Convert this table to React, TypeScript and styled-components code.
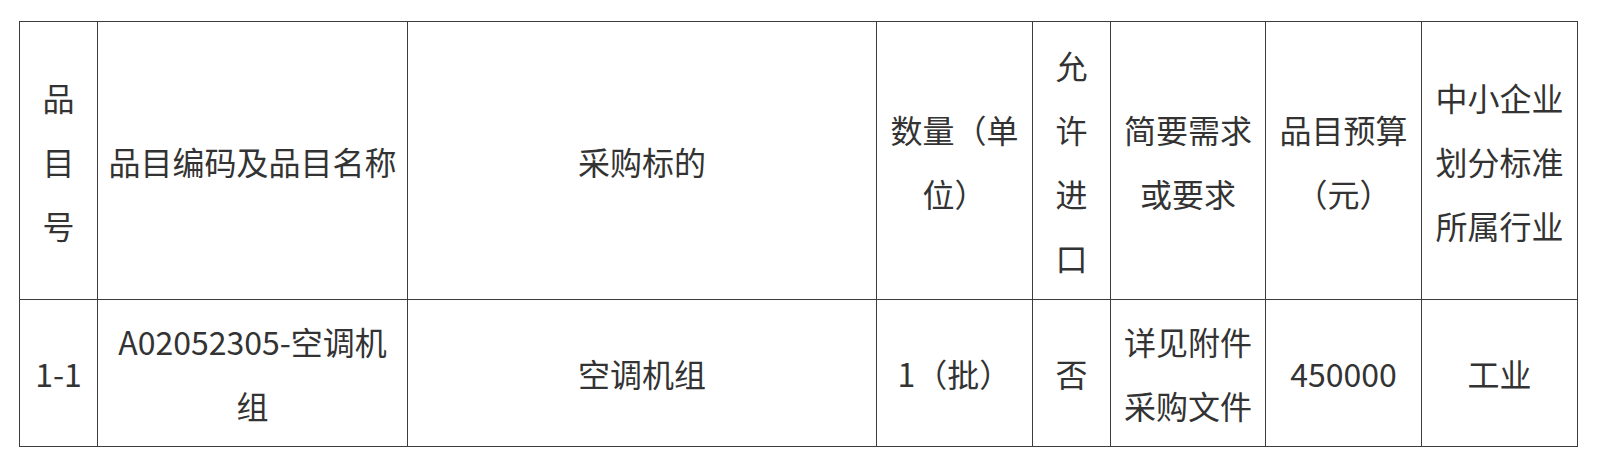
import React from "react";
import styled, { createGlobalStyle } from "styled-components";

const GlobalStyle = createGlobalStyle`
  html, body {
    margin: 0;
    padding: 0;
    background: #ffffff;
  }
  body {
    font-family: "Noto Sans CJK SC", "Noto Sans", sans-serif;
    color: #333333;
  }
`;

const columns = [78, 310, 469, 156, 78, 155, 156, 156];

const headers = [
  "品目号",
  "品目编码及品目名称",
  "采购标的",
  "数量（单位）",
  "允许进口",
  "简要需求或要求",
  "品目预算（元）",
  "中小企业划分标准所属行业",
];

const rows = [
  [
    "1-1",
    "A02052305-空调机组",
    "空调机组",
    "1（批）",
    "否",
    "详见附件采购文件",
    "450000",
    "工业",
  ],
];

export default function App() {
  return (
    <>
      <GlobalStyle />
      <Page>
        <Table>
          <colgroup>
            {columns.map((w, i) => (
              <col key={i} style={{ width: w }} />
            ))}
          </colgroup>
          <thead>
            <HeadRow>
              {headers.map((h) => (
                <Cell key={h}>{h}</Cell>
              ))}
            </HeadRow>
          </thead>
          <tbody>
            {rows.map((row, i) => (
              <DataRow key={i}>
                {row.map((c, j) => (
                  <Cell key={j}>{c}</Cell>
                ))}
              </DataRow>
            ))}
          </tbody>
        </Table>
      </Page>
    </>
  );
}

const Page = styled.div`
  padding: 21px 0 0 19px;
`;

const Table = styled.table`
  width: 1558px;
  table-layout: fixed;
  border-collapse: collapse;
  border: 1px solid #3c3c3c;
`;

const HeadRow = styled.tr`
  height: 278px;
`;

const DataRow = styled.tr`
  height: 147px;
`;

const Cell = styled.td`
  border: 1px solid #3c3c3c;
  padding: 9px 10px;
  text-align: center;
  vertical-align: middle;
  font-size: 32px;
  line-height: 64px;
  font-weight: 400;
  color: #333333;
  word-break: break-all;
`;
